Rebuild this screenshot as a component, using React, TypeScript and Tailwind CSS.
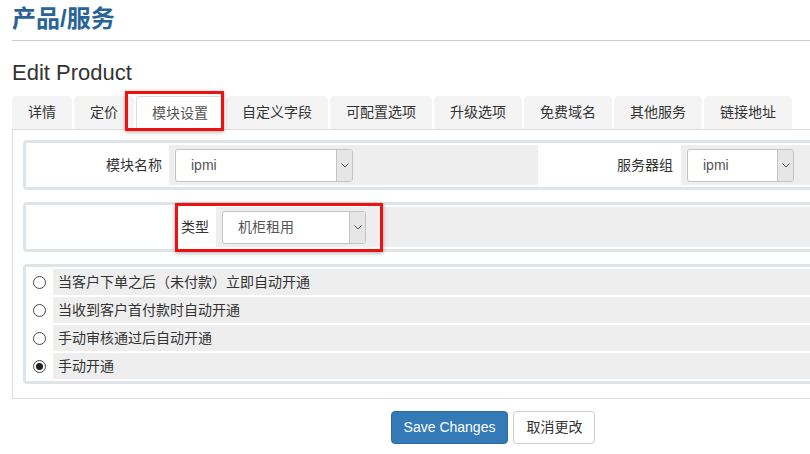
import React from "react";

const TABS = ["详情", "定价", "模块设置", "自定义字段", "可配置选项", "升级选项", "免费域名", "其他服务", "链接地址"];
const ACTIVE_TAB = "模块设置";

const PROVISION_OPTIONS = [
  "当客户下单之后（未付款）立即自动开通",
  "当收到客户首付款时自动开通",
  "手动审核通过后自动开通",
  "手动开通",
];

/** Native-looking dropdown: white field + grey arrow button on the right. */
function FakeSelect({ value, width }: { value: string; width: string }) {
  return (
    <div className={`flex h-[33px] ${width} overflow-hidden rounded-[3px] border border-[#c4c4c4] bg-white`}>
      <span className="flex flex-1 items-center pl-[15px] text-[14px] text-[#555]">{value}</span>
      <span className="flex w-[16px] items-center justify-center border-l border-[#c4c4c4] bg-[#e6e6e6]">
        <svg width="8" height="5" viewBox="0 0 8 5" fill="none">
          <path d="M0.5 0.5 L4 4 L7.5 0.5" stroke="#555" strokeWidth="1" />
        </svg>
      </span>
    </div>
  );
}

function Radio({ checked }: { checked?: boolean }) {
  return (
    <span className="flex h-[13px] w-[13px] items-center justify-center rounded-full border border-[#4a4a4a] bg-white">
      {checked && <span className="h-[7px] w-[7px] rounded-full bg-[#222]" />}
    </span>
  );
}

export default function App() {
  return (
    <div
      className="h-[454px] w-[810px] overflow-hidden bg-white text-[#333]"
      style={{ fontFamily: '"Liberation Sans", "Noto Sans CJK SC", sans-serif' }}
    >
      {/* page is wider than the captured window, so it is clipped on the right */}
      <div className="w-[986px] px-[12px] pt-[4px]">
        <h1 className="text-[24px] font-bold leading-[30px] text-[#2a6496]">产品/服务</h1>
        <div className="mt-[6px] border-b border-[#cccccc]" />

        <h2 className="mt-[19px] text-[22px] leading-[26px] text-[#333]">Edit Product</h2>

        {/* Tabs */}
        <div className="relative mt-[10px] flex gap-[2px] border-b border-[#dddddd]">
          {TABS.map((t) => (
            <div
              key={t}
              className={
                t === ACTIVE_TAB
                  ? "-mb-px flex h-[34px] items-center rounded-t-[4px] border border-[#dddddd] border-b-white bg-white px-[15px] text-[14px] text-[#555]"
                  : "flex h-[33px] items-center rounded-t-[4px] border border-[#f4f4f4] bg-[#f4f4f4] px-[15px] text-[14px] text-[#333]"
              }
            >
              {t}
            </div>
          ))}
          <div className="pointer-events-none absolute left-[113px] top-[-5px] h-[40px] w-[99px] border-[3px] border-[#ee1111] shadow-[0_1px_4px_rgba(0,0,0,0.35)]" />
        </div>

        {/* Tab panel */}
        <div className="border-x border-b border-[#dddddd] px-[10px] pb-[14px] pt-[10px] text-[14px]">
          {/* 模块名称 / 服务器组 */}
          <div className="flex gap-[2px] rounded-[4px] border-[3px] border-[#dfe4e8] bg-white p-[2px]">
            <div className="flex w-[139px] items-center justify-end pr-[5px]">模块名称</div>
            <div className="flex h-[40px] w-[369px] items-center bg-[#eeeeee] pl-[6px]">
              <FakeSelect value="ipmi" width="w-[178px]" />
            </div>
            <div className="flex w-[139px] items-center justify-end pr-[6px]">服务器组</div>
            <div className="flex h-[40px] flex-1 items-center bg-[#eeeeee] pl-[6px]">
              <FakeSelect value="ipmi" width="w-[107px]" />
            </div>
          </div>

          {/* 类型 */}
          <div className="relative mt-[12px] flex gap-[2px] rounded-[4px] border-[3px] border-[#dfe4e8] bg-white p-[2px]">
            <div className="flex w-[186px] items-center justify-end pr-[5px]">类型</div>
            <div className="flex h-[40px] flex-1 items-center bg-[#eeeeee] pl-[6px]">
              <FakeSelect value="机柜租用" width="w-[144px]" />
            </div>
            <div className="pointer-events-none absolute left-[149px] top-[-2px] h-[49px] w-[208px] border-[3px] border-[#ee1111] shadow-[0_1px_4px_rgba(0,0,0,0.35)]" />
          </div>

          {/* 开通方式 */}
          <div className="mt-[12px] flex flex-col gap-[2px] rounded-[4px] border-[3px] border-[#dfe4e8] bg-white p-[2px]">
            {PROVISION_OPTIONS.map((opt, i) => (
              <div key={opt} className="flex h-[26px] gap-[2px]">
                <div className="flex w-[23px] items-center justify-center">
                  <Radio checked={i === PROVISION_OPTIONS.length - 1} />
                </div>
                <div className="flex flex-1 items-center bg-[#eeeeee] pl-[5px]">{opt}</div>
              </div>
            ))}
          </div>
        </div>

        {/* Actions */}
        <div className="mt-[12px] flex justify-center gap-[5px]">
          <button className="h-[33px] rounded-[4px] border border-[#2e6da4] bg-[#337ab7] px-[12px] text-[14px] text-white">
            Save Changes
          </button>
          <button className="h-[33px] rounded-[4px] border border-[#cccccc] bg-white px-[12px] text-[14px] text-[#333]">
            取消更改
          </button>
        </div>
      </div>
    </div>
  );
}
